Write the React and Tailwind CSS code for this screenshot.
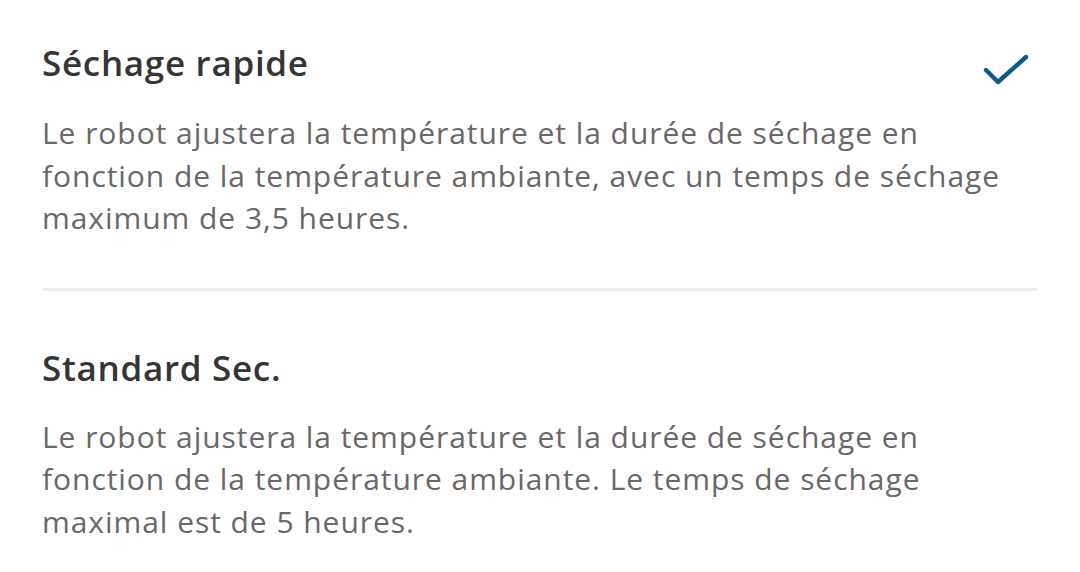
const options = [
  {
    title: 'Séchage rapide',
    text: 'Le robot ajustera la température et la durée de séchage en fonction de la température ambiante, avec un temps de séchage maximum de 3,5 heures.',
    selected: true,
  },
  {
    title: 'Standard Sec.',
    text: 'Le robot ajustera la température et la durée de séchage en fonction de la température ambiante. Le temps de séchage maximal est de 5 heures.',
    selected: false,
  },
]

function Check() {
  return (
    <svg width="48" height="36" viewBox="0 0 48 36" fill="none">
      <path d="M4 17 L16 29 L44 4" stroke="#0d5a89" strokeWidth="4.4" strokeLinecap="round" strokeLinejoin="round" />
    </svg>
  )
}

export default function App() {
  return (
    <div className="h-[572px] w-[1080px] overflow-hidden bg-white font-['Open_Sans',sans-serif]">
      <div className="px-[42px]">
        {options.map((option, index) => (
          <div key={option.title}>
            {index > 0 && <div className="h-[3px] bg-[#ececec]" />}
            <div className={index === 0 ? 'pt-[37px] pb-[48px]' : 'pt-[55px]'}>
              <div className="flex items-center justify-between">
                <h2 className="text-[35px] font-semibold leading-[44px] tracking-[0.7px] text-[#353535]">{option.title}</h2>
                {option.selected && <div className="mr-[8px] mt-[16px]"><Check /></div>}
              </div>
              <p className={`${index === 0 ? 'mt-[23px]' : 'mt-[26px]'} max-w-[980px] text-[30px] leading-[42.5px] tracking-[0.95px] text-[#686868]`}>{option.text}</p>
            </div>
          </div>
        ))}
      </div>
    </div>
  )
}
